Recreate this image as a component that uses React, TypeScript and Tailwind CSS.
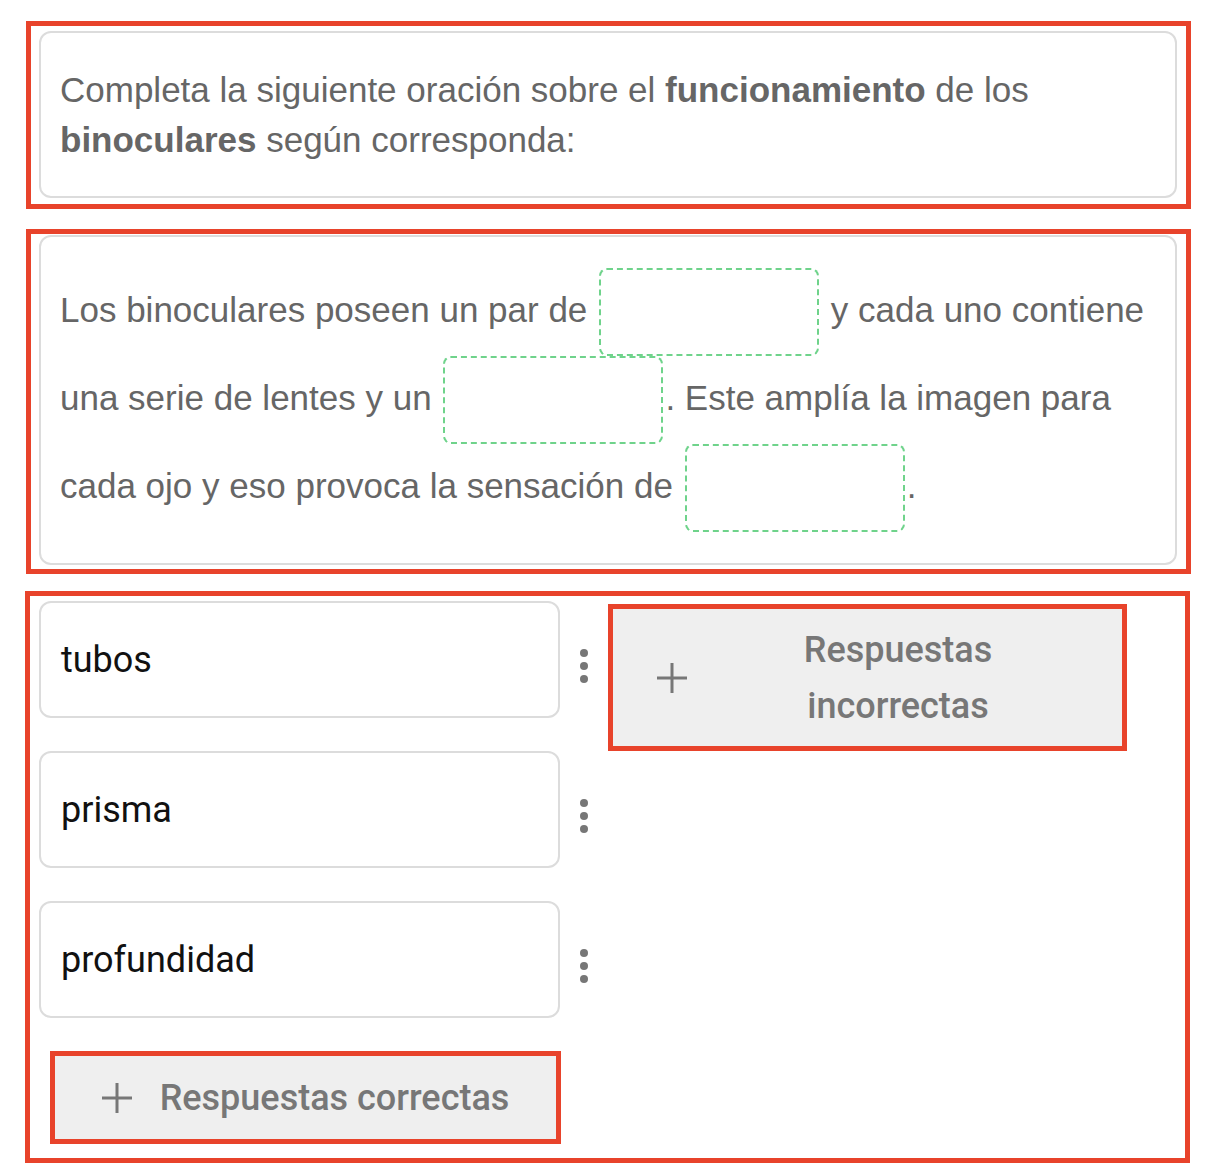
import React from "react";

const RED = "border-[#e8432b]";

function Plus() {
  return (
    <svg width="30" height="30" viewBox="0 0 30 30" className="shrink-0">
      <line x1="15" y1="0" x2="15" y2="30" stroke="#777777" strokeWidth="3" />
      <line x1="0" y1="15" x2="30" y2="15" stroke="#777777" strokeWidth="3" />
    </svg>
  );
}

function Kebab() {
  return (
    <div className="w-[48px] flex justify-center mt-[13px]">
      <div className="flex flex-col gap-[5px]">
        <span className="block w-[8px] h-[8px] rounded-full bg-[#777777]" />
        <span className="block w-[8px] h-[8px] rounded-full bg-[#777777]" />
        <span className="block w-[8px] h-[8px] rounded-full bg-[#777777]" />
      </div>
    </div>
  );
}

function Blank() {
  return (
    <span className="inline-block align-[-34px] w-[220px] h-[88px] rounded-[8px] border-2 border-dashed border-[#6fd38b] mx-[2px]" />
  );
}

function AnswerRow({ text }: { text: string }) {
  return (
    <div className="flex items-center">
      <div className="w-[521px] h-[117px] rounded-[12px] border-2 border-[#dcdcdc] bg-white px-[20px] flex items-center">
        <span className="text-[36px] text-[#111111] font-['Roboto',sans-serif] leading-none">
          {text}
        </span>
      </div>
      <Kebab />
    </div>
  );
}

export default function App() {
  return (
    <div className="bg-white w-[1213px] min-h-[1164px] pt-[21px] font-['Liberation_Sans',Arial,sans-serif]">
      {/* Section 1 */}
      <div className={`ml-[26px] w-[1165px] border-[5px] ${RED} pt-[5px] pb-[6px] pl-[8px] pr-[9px]`}>
        <div className="rounded-[12px] border-2 border-[#dcdcdc] px-[19px] pt-[32px] pb-[31px] text-[35px] leading-[50px] text-[#666666]">
          Completa la siguiente oración sobre el <b className="font-bold">funcionamiento</b> de los
          <br />
          <b className="font-bold">binoculares</b> según corresponda:
        </div>
      </div>

      {/* Section 2 */}
      <div className={`ml-[26px] mt-[20px] w-[1165px] border-[5px] ${RED} pt-[1px] pb-[4px] pl-[8px] pr-[9px]`}>
        <div className="rounded-[12px] border-2 border-[#dcdcdc] px-[19px] pt-[31px] pb-[31px] text-[35px] leading-[80px] text-[#666666] whitespace-nowrap">
          Los binoculares poseen un par de <Blank /> y cada uno contiene
          <br />
          una serie de lentes y un <Blank />. Este amplía la imagen para
          <br />
          cada ojo y eso provoca la sensación de <Blank />.
        </div>
      </div>

      {/* Section 3 */}
      <div className={`ml-[25px] mt-[17px] w-[1165px] border-[5px] ${RED} pt-[5px] pb-[14px] pl-[9px] flex items-start`}>
        <div className="flex flex-col">
          <div className="flex flex-col gap-[33px]">
            <AnswerRow text="tubos" />
            <AnswerRow text="prisma" />
            <AnswerRow text="profundidad" />
          </div>
          <div
            className={`ml-[11px] mt-[33px] w-[511px] h-[93px] border-[5px] ${RED} bg-[#efefef] flex items-center justify-center gap-[28px]`}
          >
            <Plus />
            <span className="text-[36px] font-medium text-[#777777] font-['Roboto',sans-serif] leading-none">
              Respuestas correctas
            </span>
          </div>
        </div>
        <div
          className={`mt-[3px] w-[519px] h-[147px] border-[5px] ${RED} bg-[#efefef] flex items-center pl-[44px] pr-[13px]`}
        >
          <Plus />
          <div className="flex-1 text-center text-[36px] font-medium text-[#777777] font-['Roboto',sans-serif] leading-[56px]">
            Respuestas
            <br />
            incorrectas
          </div>
        </div>
      </div>
    </div>
  );
}
